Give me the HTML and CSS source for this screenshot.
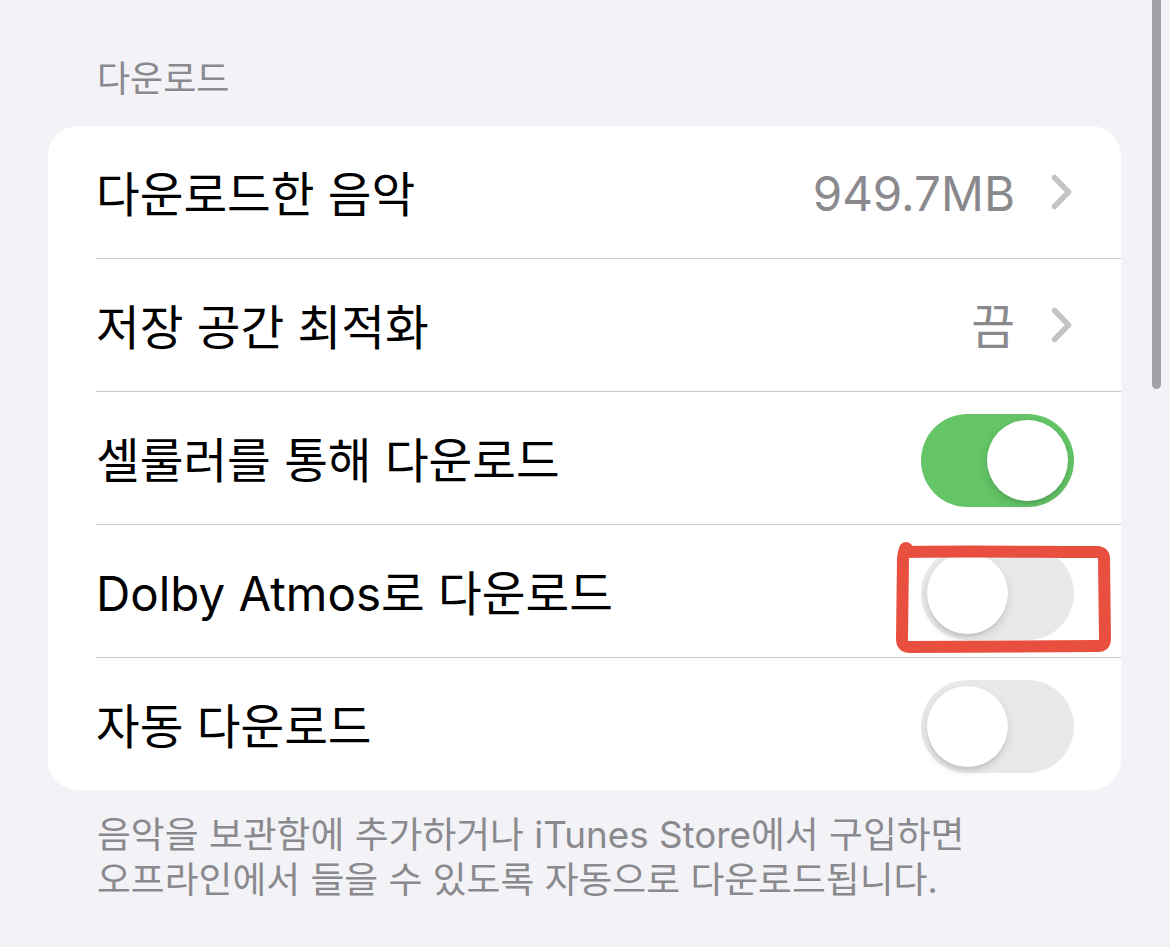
FILE: index.html
```html
<!DOCTYPE html>
<html lang="ko">
<head>
<meta charset="utf-8">
<link rel="stylesheet" href="styles.css">
</head>
<body>
<div class="page">
  <div class="section-title">다운로드</div>
  <div class="card">
    <div class="row">
      <span class="label">다운로드한 음악</span>
      <span class="detail">
        <span class="value">949.7MB</span>
        <svg class="chevron" width="21" height="36" viewBox="0 0 21 36"><polyline points="3.5,3.5 17.5,18 3.5,32.5" fill="none" stroke="#c4c4c7" stroke-width="5.5" stroke-linecap="round" stroke-linejoin="round"/></svg>
      </span>
    </div>
    <div class="row">
      <span class="label">저장 공간 최적화</span>
      <span class="detail">
        <span class="value">끔</span>
        <svg class="chevron" width="21" height="36" viewBox="0 0 21 36"><polyline points="3.5,3.5 17.5,18 3.5,32.5" fill="none" stroke="#c4c4c7" stroke-width="5.5" stroke-linecap="round" stroke-linejoin="round"/></svg>
      </span>
    </div>
    <div class="row">
      <span class="label">셀룰러를 통해 다운로드</span>
      <span class="toggle on"><span class="knob"></span></span>
    </div>
    <div class="row annotated">
      <span class="label">Dolby Atmos로 다운로드</span>
      <span class="toggle"><span class="knob"></span></span>
      <svg class="mark" width="230" height="124" viewBox="0 0 230 124">
        <path d="M14 13 C 70 12, 150 13, 207 13 Q 214 13 214 20 L 215 100 Q 215 107 208 107 L 20 108 Q 12 108 12 100 L 13 20 Q 13 14 16 13" fill="none" stroke="#e94f3f" stroke-width="12" stroke-linecap="round" stroke-linejoin="round"/>
        <circle cx="16" cy="10" r="7" fill="#e94f3f"/>
      </svg>
    </div>
    <div class="row">
      <span class="label">자동 다운로드</span>
      <span class="toggle"><span class="knob"></span></span>
    </div>
  </div>
  <div class="footer">음악을 보관함에 추가하거나 iTunes Store에서 구입하면<br>오프라인에서 들을 수 있도록 자동으로 다운로드됩니다.</div>
</div>
<div class="scrollbar"></div>
</body>
</html>
```
FILE: styles.css
```css
html, body {
  margin: 0;
  padding: 0;
  background: #f2f2f7;
  height: 100%;
  overflow: hidden;
}
body {
  font-family: "Inter", "Noto Sans CJK KR", sans-serif;
  color: #000;
  position: relative;
}
.page {
  padding: 56px 0 0 48px;
  width: 1073px;
}
.section-title {
  font-size: 36px;
  line-height: 46px;
  color: #8a8a8e;
  padding-left: 49px;
  margin-bottom: 24px;
}
.card {
  background: #fff;
  border-radius: 30px;
}
.row {
  box-sizing: border-box;
  height: 133px;
  margin-left: 48px;
  padding-right: 47px;
  display: flex;
  align-items: center;
  justify-content: space-between;
  border-bottom: 1px solid #c8c8ca;
  position: relative;
}
.row:last-child {
  border-bottom: none;
  height: 132px;
}
.label {
  font-size: 47.5px;
  line-height: 56px;
  padding-top: 6px;
}
.detail {
  display: flex;
  align-items: center;
  gap: 36px;
  padding-right: 2px;
}
.value {
  font-size: 47.5px;
  line-height: 56px;
  color: #8a8a8e;
  padding-top: 4px;
}
.chevron {
  display: block;
}
.toggle {
  width: 153px;
  height: 93px;
  border-radius: 47px;
  background: #e9e9eb;
  position: relative;
  flex: none;
  margin-top: 4px;
}
.toggle.on {
  background: #64c466;
}
.knob {
  position: absolute;
  top: 6px;
  left: 6px;
  width: 81px;
  height: 81px;
  border-radius: 50%;
  background: #fff;
  box-shadow: 0 4px 10px rgba(0,0,0,0.13), 0 3px 1px rgba(0,0,0,0.05);
}
.toggle.on .knob {
  left: 66px;
}
.mark {
  position: absolute;
  left: 794px;
  top: 14px;
}
.footer {
  padding: 22px 0 0 49px;
  font-size: 36.8px;
  line-height: 45px;
  color: #8a8a8e;
}
.scrollbar {
  position: absolute;
  top: -10px;
  left: 1152px;
  width: 9px;
  height: 399px;
  border-radius: 5px;
  background: #a0a0a5;
}
```
